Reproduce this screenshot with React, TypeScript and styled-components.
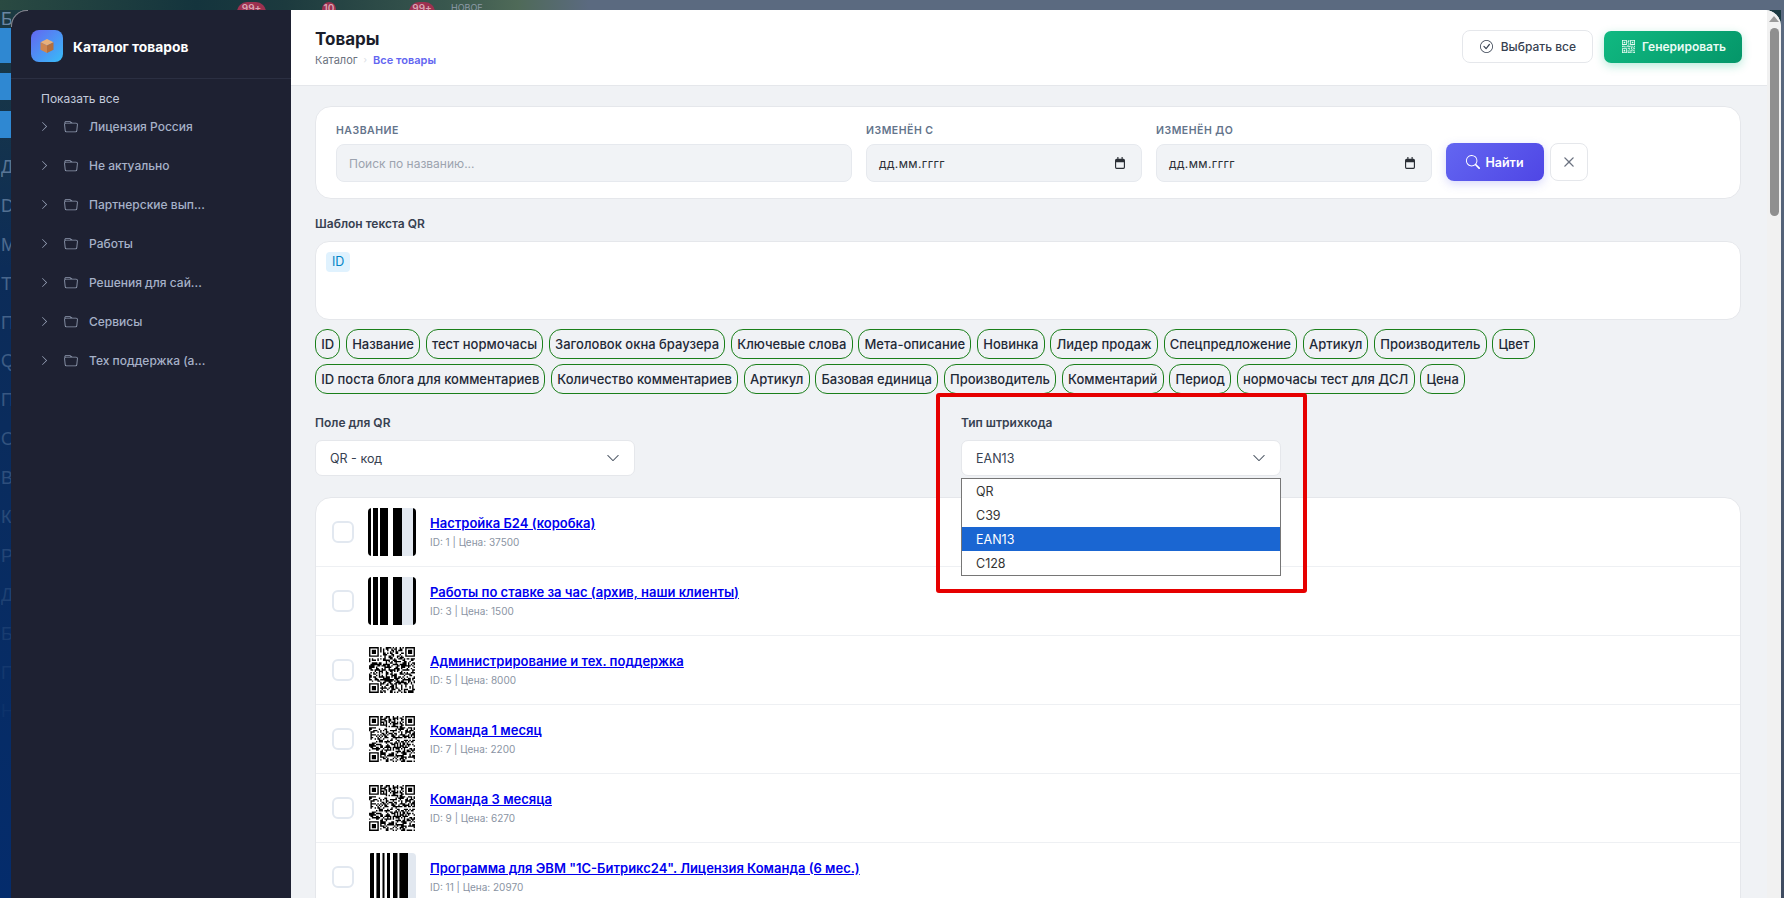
import React from "react";
import styled, { createGlobalStyle } from "styled-components";
import {
  BsCheckCircle,
  BsChevronDown,
  BsChevronRight,
  BsFolder,
  BsQrCode,
  BsSearch,
  BsX,
} from "react-icons/bs";

const Global = createGlobalStyle`
  html, body { margin: 0; height: 100%; overflow: hidden; }
  body { font-family: Inter, "Noto Sans", sans-serif; color: #1f2937; }
  * { box-sizing: border-box; }
`;

const Page = styled.div`
  display: grid;
  grid-template-columns: 11px 1fr 3px;
  grid-template-rows: 10px 1fr;
  width: 100vw;
  height: 100vh;
  background: linear-gradient(180deg, #1c3a40 0%, #0c2c58 30%, #042c6c 100%);
  overflow: hidden;
`;

const TopStrip = styled.div`
  grid-column: 1 / 4;
  display: flex;
  overflow: hidden;
  background: linear-gradient(90deg, #2a4a42 0%, #14343d 11%, #1c3a3e 16%, #39574e 25%, #4f6a58 29%, #5b6a80 33%, #5b6a80 100%);
`;

const TopBadge = styled.span<{ $left: number; $width: number }>`
  flex: none;
  margin-left: ${(p) => p.$left}px;
  width: ${(p) => p.$width}px;
  height: 20px;
  margin-top: 2px;
  border-radius: 10px;
  background: #9c3150;
  color: #d9a6b4;
  font-size: 10px;
  font-weight: 600;
  text-align: center;
`;

const TopGhost = styled.span`
  flex: none;
  margin-left: 16px;
  margin-top: 2px;
  color: #8d9aa8;
  font-size: 9px;
`;

const LeftStrip = styled.div`
  display: flex;
  flex-direction: column;
  overflow: hidden;
  color: #7e9abb;
`;

const StripBlock = styled.div<{ $height: number; $gap: number }>`
  flex: none;
  height: ${(p) => p.$height}px;
  margin-bottom: ${(p) => p.$gap}px;
  background: #2f88d2;
`;

const StripLetter = styled.div<{ $fade: number }>`
  flex: none;
  height: 38.9px;
  padding-left: 1px;
  font-family: "Liberation Sans", sans-serif;
  font-size: 18px;
  line-height: 38.9px;
  opacity: ${(p) => p.$fade};
`;

const StripCap = styled(StripLetter)`
  height: 18px;
  line-height: 18px;
`;

const RightStrip = styled.div`
  background: linear-gradient(180deg, #5b6a80, #3e4b60);
`;

const Win = styled.div`
  display: flex;
  min-height: 0;
  overflow: hidden;
  background: #f0f2f5;
  border-radius: 16px 16px 0 0;
`;

const Sidebar = styled.aside`
  position: relative;
  flex: none;
  width: 280px;
  background: #1e2132;

  &::before {
    content: "";
    position: absolute;
    top: 0;
    left: 0;
    width: 16px;
    height: 16px;
    border-top: 1px solid rgba(255, 255, 255, 0.45);
    border-left: 1px solid rgba(255, 255, 255, 0.45);
    border-radius: 16px 0 0 0;
  }
`;

const Brand = styled.div`
  display: flex;
  align-items: center;
  gap: 10px;
  height: 69px;
  padding: 4px 20px 0;
  border-bottom: 1px solid #2b2f42;
`;

const BrandTile = styled.div`
  display: flex;
  align-items: center;
  justify-content: center;
  width: 32px;
  height: 32px;
  border-radius: 8px;
  background: linear-gradient(135deg, #6366f1, #38bdf8);
`;

const BrandName = styled.div`
  margin-top: 1px;
  color: #fff;
  font-size: 13.8px;
  font-weight: 700;
`;

const ShowAll = styled.div`
  padding: 12px 0 0 30px;
  color: #c3cbdc;
  font-size: 12px;
  line-height: 15px;
`;

const Tree = styled.ul`
  margin: 0;
  padding: 1px 0 0 28px;
  list-style: none;
`;

const TreeItem = styled.li`
  display: flex;
  align-items: center;
  height: 39px;
  color: #a6b1c8;
  font-size: 12px;
  font-weight: 500;
`;

const TreeChevron = styled(BsChevronRight)`
  flex: none;
  width: 11px;
  height: 11px;
  margin-right: 14px;
`;

const TreeFolder = styled(BsFolder)`
  flex: none;
  width: 14px;
  height: 14px;
  margin-right: 11px;
  opacity: 0.85;
`;

const Main = styled.main`
  flex: 1;
  min-width: 0;
  display: flex;
  flex-direction: column;
`;

const Header = styled.header`
  flex: none;
  display: flex;
  align-items: center;
  justify-content: space-between;
  height: 76px;
  padding: 0 25px 0 24px;
  background: #fff;
  border-bottom: 1px solid #e5e7eb;
`;

const Title = styled.h1`
  margin: 0 0 3px;
  color: #1a1d2b;
  font-size: 17px;
  font-weight: 700;
  line-height: 22px;
`;

const Crumbs = styled.div`
  display: flex;
  align-items: center;
  gap: 6px;
  color: #6b7280;
  font-size: 11px;
  line-height: 14px;
`;

const CrumbSep = styled.span`
  color: #d8dce3;
  font-size: 9px;
`;

const CrumbNow = styled.span`
  color: #6366f1;
  font-weight: 600;
`;

const Actions = styled.div`
  display: flex;
  align-items: center;
  gap: 11px;
  margin-top: -2px;
`;

const GhostButton = styled.button`
  display: flex;
  align-items: center;
  gap: 8px;
  height: 33px;
  padding: 0 16px 0 17px;
  border: 1px solid #e5e7eb;
  border-radius: 8px;
  background: #fff;
  color: #374151;
  font: 500 12px Inter, sans-serif;
`;

const GreenButton = styled.button`
  display: flex;
  align-items: center;
  gap: 7px;
  height: 32px;
  padding: 0 16px 0 18px;
  border: 0;
  border-radius: 7px;
  background: linear-gradient(135deg, #10b981, #059669);
  box-shadow: 0 3px 10px rgba(16, 185, 129, 0.3);
  color: #e9fbf4;
  font: 600 12px Inter, sans-serif;
`;

const Content = styled.div`
  flex: 1;
  min-height: 0;
  overflow: hidden;
  padding: 20px 26px 0 24px;
`;

const FilterCard = styled.form`
  display: flex;
  align-items: flex-end;
  gap: 14px;
  padding: 17px 20px 16px;
  border: 1px solid #e5e7eb;
  border-radius: 16px;
  background: #fff;
`;

const FilterField = styled.label<{ $width: number }>`
  display: block;
  flex: none;
  width: ${(p) => p.$width}px;
`;

const FilterLabel = styled.div`
  margin-bottom: 6px;
  color: #64748b;
  font-size: 10.5px;
  font-weight: 600;
  letter-spacing: 0.5px;
  line-height: 14px;
`;

const FilterInput = styled.div`
  display: flex;
  align-items: center;
  justify-content: space-between;
  height: 38px;
  padding: 0 16px 0 12px;
  border: 1px solid #e6e9ee;
  border-radius: 8px;
  background: #f1f3f6;
  color: #2b2f36;
  font-size: 12px;
  letter-spacing: 0.4px;
`;

const Placeholder = styled.span`
  color: #9ca3af;
  letter-spacing: 0;
`;

const FilterButtons = styled.div`
  display: flex;
  gap: 6px;
  margin-bottom: 1px;
`;

const SearchButton = styled.button`
  display: flex;
  align-items: center;
  justify-content: center;
  gap: 5px;
  width: 98px;
  height: 38px;
  border: 0;
  border-radius: 8px;
  background: linear-gradient(135deg, #6366f1, #4f46e5);
  box-shadow: 0 3px 10px rgba(99, 102, 241, 0.25);
  color: #fff;
  font: 600 12.5px Inter, sans-serif;
`;

const ClearButton = styled.button`
  display: flex;
  align-items: center;
  justify-content: center;
  width: 38px;
  height: 38px;
  padding: 0;
  border: 1px solid #e5e7eb;
  border-radius: 8px;
  background: #fff;
  color: #6b7280;
`;

const SectionLabel = styled.div`
  margin-bottom: 10px;
  color: #374151;
  font-size: 12px;
  font-weight: 600;
  line-height: 15px;
`;

const TemplateLabel = styled(SectionLabel)`
  margin-top: 17px;
`;

const TemplateBox = styled.div`
  height: 79px;
  padding: 8px 10px;
  border: 1px solid #e5e7eb;
  border-radius: 14px;
  background: #fff;
`;

const TemplateToken = styled.span`
  display: inline-block;
  padding: 0 6px;
  border-radius: 4px;
  background: #e0f2fe;
  color: #0284c7;
  font-size: 12.5px;
  line-height: 20px;
`;

const ChipWrap = styled.div`
  display: flex;
  flex-wrap: wrap;
  gap: 5px 5.7px;
  margin: 9px 0 21px;
`;

const Chip = styled.span`
  padding: 4px 5.2px;
  border: 1px solid #1a7f1a;
  border-radius: 12px;
  color: #1f2937;
  font-size: 13px;
  font-weight: 500;
  line-height: 20px;
`;

const SelectRow = styled.div`
  display: grid;
  grid-template-columns: 646px 320px;
  margin-bottom: 21px;
`;

const SelectField = styled.div`
  position: relative;
  width: 320px;
`;

const SelectBox = styled.div`
  display: flex;
  align-items: center;
  justify-content: space-between;
  height: 36px;
  padding: 0 14px 0 14px;
  border: 1px solid #e5e7eb;
  border-radius: 7px;
  background: #fff;
  color: #374151;
  font-size: 12.5px;
`;

const SelectChevron = styled(BsChevronDown)`
  width: 14px;
  height: 14px;
  color: #4b5563;
`;

const Dropdown = styled.ul`
  position: absolute;
  z-index: 3;
  top: 63px;
  left: 0;
  width: 320px;
  margin: 0;
  padding: 0;
  list-style: none;
  border: 1px solid #767676;
  background: #fff;
`;

const DropdownOption = styled.li<{ $active?: boolean }>`
  height: 24px;
  padding-left: 14px;
  overflow: hidden;
  background: ${(p) => (p.$active ? "#1a66d2" : "transparent")};
  color: ${(p) => (p.$active ? "#fff" : "#333")};
  font-size: 12.5px;
  line-height: 26px;
`;

const RedFrame = styled.div`
  position: absolute;
  z-index: 4;
  top: -22px;
  left: -25px;
  width: 371px;
  height: 200px;
  border: 4px solid #e60000;
  border-radius: 3px;
  pointer-events: none;
`;

const ListCard = styled.div`
  border: 1px solid #e5e7eb;
  border-radius: 16px 16px 0 0;
  background: #fff;
`;

const Row = styled.div`
  display: flex;
  align-items: center;
  height: 69px;
  padding: 0 0 0 16px;
  border-bottom: 1px solid #eef0f3;
`;

const Check = styled.span`
  flex: none;
  width: 22px;
  height: 22px;
  margin-right: 14px;
  border: 2px solid #e2e8f0;
  border-radius: 6px;
  background: #fff;
`;

const Thumb = styled.svg`
  flex: none;
  display: block;
  width: 48px;
  height: 48px;
  margin-right: 14px;
  border-radius: 4px;
`;

const RowText = styled.div`
  min-width: 0;
  padding-bottom: 2px;
`;

const RowTitle = styled.a`
  display: block;
  color: #0000ee;
  font-size: 13px;
  font-weight: 600;
  line-height: 18px;
  text-decoration: underline;
`;

const RowMeta = styled.div`
  margin-top: 3px;
  color: #8a94a3;
  font-size: 10px;
  line-height: 14px;
`;

const Scrollbar = styled.div`
  flex: none;
  display: flex;
  flex-direction: column;
  align-items: center;
  width: 14px;
  background: #f1f1f1;
`;

const ScrollArrow = styled.div`
  width: 0;
  height: 0;
  margin-top: 6px;
  border-left: 5px solid transparent;
  border-right: 5px solid transparent;
  border-bottom: 6px solid #9a9a9a;
`;

const ScrollThumb = styled.div`
  width: 9px;
  height: 188px;
  margin-top: 6px;
  border-radius: 5px;
  background: #8f8f8f;
`;

// псевдослучайный QR, только для картинки
const buildQr = (seed: number) => {
  const size = 33;
  let x = seed;
  const next = () => {
    x = (x * 1103515245 + 12345) & 0x7fffffff;
    return (x >> 16) & 1;
  };
  const inFinder = (c: number, r: number) =>
    (c < 8 && r < 8) || (c >= size - 8 && r < 8) || (c < 8 && r >= size - 8);
  let d = "";
  for (let r = 0; r < size; r++) {
    for (let c = 0; c < size; c++) {
      if (!inFinder(c, r) && next()) d += `M${c} ${r}h1v1h-1z`;
    }
  }
  [
    [0, 0],
    [size - 7, 0],
    [0, size - 7],
  ].forEach(([a, b]) => {
    d += `M${a} ${b}h7v7h-7zM${a + 1} ${b + 1}v5h5v-5zM${a + 2} ${b + 2}h3v3h-3z`;
  });
  return d;
};

const Qr = ({ seed }: { seed: number }) => (
  <Thumb viewBox="-0.75 -0.75 34.5 34.5">
    <rect x="-2" y="-2" width="38" height="38" fill="#fff" />
    <path d={buildQr(seed)} fill="#000" fillRule="evenodd" />
  </Thumb>
);

const Barcode = ({ bars }: { bars: number[][] }) => (
  <Thumb viewBox="0 0 48 48">
    <rect width="48" height="48" fill="#fff" />
    <rect x="34" width="14" height="48" fill="#e2e8f0" />
    {bars.map(([x, w]) => (
      <rect key={x} x={x} width={w} height="48" fill="#000" />
    ))}
  </Thumb>
);

const BAR_A = [[0, 3], [5, 5], [12, 8], [25, 9], [45, 3]];
const BAR_B = [[2, 4], [8.4, 3.6], [14.5, 2], [19, 3], [25, 4.5], [31.4, 8.6]];

const folders = [
  "Лицензия Россия",
  "Не актуально",
  "Партнерские вып...",
  "Работы",
  "Решения для сай...",
  "Сервисы",
  "Тех поддержка (а...",
];

const chips = [
  "ID", "Название", "тест нормочасы", "Заголовок окна браузера", "Ключевые слова",
  "Мета-описание", "Новинка", "Лидер продаж", "Спецпредложение", "Артикул",
  "Производитель", "Цвет", "ID поста блога для комментариев", "Количество комментариев",
  "Артикул", "Базовая единица", "Производитель", "Комментарий", "Период",
  "нормочасы тест для ДСЛ", "Цена",
];

const products = [
  { title: "Настройка Б24 (коробка)", id: 1, price: 37500, bars: BAR_A },
  { title: "Работы по ставке за час (архив, наши клиенты)", id: 3, price: 1500, bars: BAR_A },
  { title: "Администрирование и тех. поддержка", id: 5, price: 8000, qr: 11 },
  { title: "Команда 1 месяц", id: 7, price: 2200, qr: 29 },
  { title: "Команда 3 месяца", id: 9, price: 6270, qr: 29 },
  { title: 'Программа для ЭВМ "1С-Битрикс24". Лицензия Команда (6 мес.)', id: 11, price: 20970, bars: BAR_B },
];

const letters = ["Д", "D", "М", "Т", "П", "Q", "П", "О", "В", "К", "Р", "Д", "Б", "П", "Н"];

const CalendarIcon = () => (
  <svg width="10" height="12" viewBox="0 0 13 14" preserveAspectRatio="none">
    <path d="M3 0v2H2a2 2 0 0 0-2 2v8a2 2 0 0 0 2 2h9a2 2 0 0 0 2-2V4a2 2 0 0 0-2-2h-1V0H8.500v2h-4V0zM1.500 6h10v6a.5.5 0 0 1-.5.5H2a.5.5 0 0 1-.5-.5z" fill="#2b2f36" />
  </svg>
);

const BoxIcon = () => (
  <svg width="16" height="16" viewBox="0 0 16 16">
    <path d="M8 1l6.500 3.200L8 7.400 1.500 4.200z" fill="#e8b07a" />
    <path d="M1.500 4.200L8 7.400V15l-6.500-3.300z" fill="#cf8650" />
    <path d="M14.500 4.200L8 7.400V15l6.500-3.300z" fill="#b46f3e" />
  </svg>
);

export default function App() {
  return (
    <>
      <Global />
      <Page>
        <TopStrip>
          <TopBadge $left={237} $width={29}>99+</TopBadge>
          <TopBadge $left={56} $width={14}>10</TopBadge>
          <TopBadge $left={73} $width={26}>99+</TopBadge>
          <TopGhost>НОВОЕ</TopGhost>
        </TopStrip>
        <LeftStrip>
          <StripCap $fade={0.8}>Б</StripCap>
          <StripBlock $height={35} $gap={10} />
          <StripBlock $height={27} $gap={11} />
          <StripBlock $height={27} $gap={10} />
          {letters.map((l, i) => (
            <StripLetter key={i} $fade={0.65 - i * 0.042}>{l}</StripLetter>
          ))}
        </LeftStrip>
        <Win>
          <Sidebar>
            <Brand>
              <BrandTile><BoxIcon /></BrandTile>
              <BrandName>Каталог товаров</BrandName>
            </Brand>
            <ShowAll>Показать все</ShowAll>
            <Tree>
              {folders.map((f) => (
                <TreeItem key={f}>
                  <TreeChevron />
                  <TreeFolder />
                  {f}
                </TreeItem>
              ))}
            </Tree>
          </Sidebar>
          <Main>
            <Header>
              <div>
                <Title>Товары</Title>
                <Crumbs>
                  Каталог <CrumbSep>›</CrumbSep> <CrumbNow>Все товары</CrumbNow>
                </Crumbs>
              </div>
              <Actions>
                <GhostButton><BsCheckCircle size={13} /> Выбрать все</GhostButton>
                <GreenButton><BsQrCode size={13} /> Генерировать</GreenButton>
              </Actions>
            </Header>
            <Content>
              <FilterCard>
                <FilterField $width={516}>
                  <FilterLabel>НАЗВАНИЕ</FilterLabel>
                  <FilterInput><Placeholder>Поиск по названию...</Placeholder></FilterInput>
                </FilterField>
                <FilterField $width={276}>
                  <FilterLabel>ИЗМЕНЁН С</FilterLabel>
                  <FilterInput>дд.мм.гггг <CalendarIcon /></FilterInput>
                </FilterField>
                <FilterField $width={276}>
                  <FilterLabel>ИЗМЕНЁН ДО</FilterLabel>
                  <FilterInput>дд.мм.гггг <CalendarIcon /></FilterInput>
                </FilterField>
                <FilterButtons>
                  <SearchButton type="button"><BsSearch size={14} /> Найти</SearchButton>
                  <ClearButton type="button"><BsX size={22} /></ClearButton>
                </FilterButtons>
              </FilterCard>

              <TemplateLabel>Шаблон текста QR</TemplateLabel>
              <TemplateBox><TemplateToken>ID</TemplateToken></TemplateBox>
              <ChipWrap>
                {chips.map((c, i) => <Chip key={i}>{c}</Chip>)}
              </ChipWrap>

              <SelectRow>
                <SelectField>
                  <SectionLabel>Поле для QR</SectionLabel>
                  <SelectBox>QR - код <SelectChevron /></SelectBox>
                </SelectField>
                <SelectField>
                  <SectionLabel>Тип штрихкода</SectionLabel>
                  <SelectBox>EAN13 <SelectChevron /></SelectBox>
                  <Dropdown>
                    <DropdownOption>QR</DropdownOption>
                    <DropdownOption>C39</DropdownOption>
                    <DropdownOption $active>EAN13</DropdownOption>
                    <DropdownOption>C128</DropdownOption>
                  </Dropdown>
                  <RedFrame />
                </SelectField>
              </SelectRow>

              <ListCard>
                {products.map((p) => (
                  <Row key={p.id}>
                    <Check />
                    {p.bars ? <Barcode bars={p.bars} /> : <Qr seed={p.qr as number} />}
                    <RowText>
                      <RowTitle>{p.title}</RowTitle>
                      <RowMeta>ID: {p.id} | Цена: {p.price}</RowMeta>
                    </RowText>
                  </Row>
                ))}
              </ListCard>
            </Content>
          </Main>
          <Scrollbar>
            <ScrollArrow />
            <ScrollThumb />
          </Scrollbar>
        </Win>
        <RightStrip />
      </Page>
    </>
  );
}
